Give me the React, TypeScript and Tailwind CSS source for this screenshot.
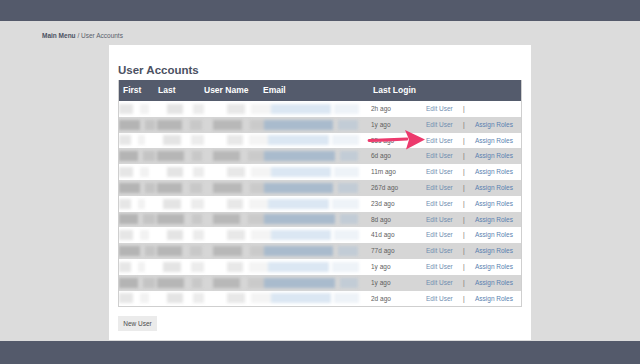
import React from "react";

type Seg = [number, number, string];

const times = ["2h ago", "1y ago", "55s ago", "6d ago", "11m ago", "267d ago", "23d ago", "8d ago", "41d ago", "77d ago", "1y ago", "1y ago", "2d ago"];

// blurred blocks standing in for the redacted names / emails
const lightRow: Seg[] = [
  [0, 14, "#e6e6e6"], [6, 10, "#f2f2f2"], [16, 18, "#e4e4e4"], [10, 14, "#ececec"],
  [22, 18, "#e8e8e8"], [4, 22, "#f4f4f4"], [0, 62, "#dbe7f3"], [2, 28, "#eef3f8"],
];
const darkRow: Seg[] = [
  [0, 22, "#b4b4b4"], [4, 12, "#c4c4c4"], [0, 28, "#b6b6b6"], [8, 12, "#c8c8c8"],
  [10, 30, "#b8b8b8"], [6, 16, "#cacaca"], [0, 72, "#a9bbcd"], [4, 20, "#c2ccd6"],
];

function BlurStrip({ dark, i }: { dark: boolean; i: number }) {
  const segs = dark ? darkRow : lightRow;
  return (
    <div className="flex h-full w-[240px] items-center blur-[1.5px]">
      {segs.map(([ml, w, c], k) => (
        <div
          key={k}
          className="h-[10px]"
          style={{ marginLeft: ml + ((i * 3 + k) % 3), width: w - ((i + k) % 4), background: c }}
        />
      ))}
    </div>
  );
}

export default function App() {
  return (
    <div className="flex h-[364px] w-[640px] flex-col overflow-hidden font-['Liberation_Sans',Arial,sans-serif]">
      <div className="h-[21px] bg-[#545a6b]" />
      <div className="h-[320px] bg-[#dcdcdc]">
        <div className="pl-[42px] pt-[11px] text-[6.5px] leading-[8px] text-[#5a5f6b]">
          <span className="font-bold text-[#4b5162]">Main Menu</span> / User Accounts
        </div>
        <div className="ml-[109px] mt-[5px] h-[295px] w-[422px] bg-white px-[9px] pt-[17px]">
          <div className="text-[11.5px] font-bold leading-[16px] text-[#4b5162]">User Accounts</div>
          <div className="relative mt-[2px] border border-t-0 border-[#cfcfcf]">
            <div className="flex h-[21px] items-center bg-[#545b6c] text-[8.5px] font-bold text-white">
              <div className="w-[35px] pl-[4px]">First</div>
              <div className="w-[46px] pl-[4px]">Last</div>
              <div className="w-[59px] pl-[4px]">User Name</div>
              <div className="w-[110px] pl-[4px]">Email</div>
              <div className="w-[55px] pl-[4px]">Last Login</div>
              <div className="flex-1" />
            </div>
            {times.map((t, i) => {
              const dark = i % 2 === 1;
              return (
                <div
                  key={i}
                  className={`flex h-[15.8px] items-center text-[6.5px] ${dark ? "bg-[#d6d6d6]" : "bg-white"}`}
                >
                  <div className="h-full w-[250px] overflow-hidden">
                    <BlurStrip dark={dark} i={i} />
                  </div>
                  <div className="w-[57px] pl-[2px] text-[#5e5e5e]">{t}</div>
                  <div className="w-[37px] text-[#6f8db0]">Edit User</div>
                  <div className="w-[12px] text-[#707070]">|</div>
                  {i > 0 && <div className="text-[#5a7fb0]">Assign Roles</div>}
                </div>
              );
            })}
            <svg className="absolute left-[248px] top-[49px]" width="60" height="22" viewBox="0 0 60 22">
              <path d="M2 11.5 Q20 11 40 10" stroke="#ec3a6d" strokeWidth="2.8" fill="none" strokeLinecap="round" />
              <path d="M38 1 L58 10.5 L39 20.5 L42 10.5 Z" fill="#ec3a6d" strokeLinejoin="round" />
            </svg>
          </div>
          <button className="mt-[9px] h-[15px] w-[39px] bg-[#ebebeb] text-[6.5px] text-[#4b4b4b]">New User</button>
        </div>
      </div>
      <div className="flex-1 bg-[#545a6b]" />
    </div>
  );
}
